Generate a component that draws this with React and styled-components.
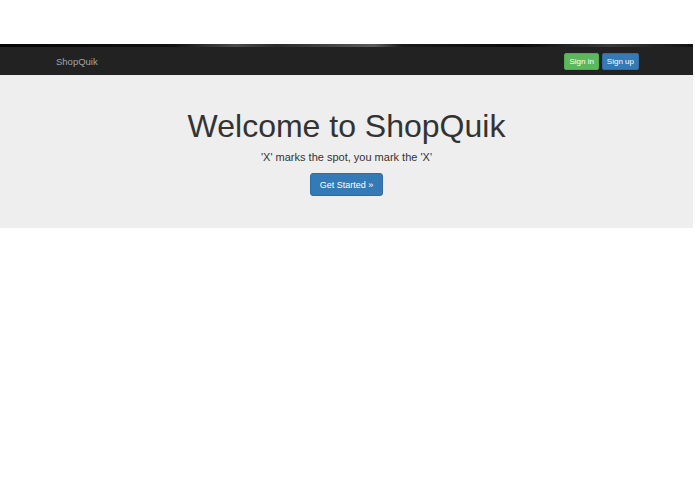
import React from 'react';
import styled, { createGlobalStyle } from 'styled-components';

const GlobalStyle = createGlobalStyle`
    body {
        margin: 0;
        background-color: #ffffff;
        font-family: "Liberation Sans", Arial, sans-serif;
        color: #333333;
    }
`;

const Page = styled.div`
    width: 693px;
    padding-top: 44px;
`;

const Header = styled.header`
    display: flex;
    flex-direction: column;
`;

const Shine = styled.div`
    height: 3px;
    background-image: linear-gradient(
        to right,
        #050505 0%,
        #111111 25%,
        #4a4a4a 34%,
        #2a2a2a 40%,
        #5a5a5a 54%,
        #1a1a1a 58%,
        #0a0a0a 75%,
        #3a3a3a 88%,
        #111111 100%
    );
`;

const NavBar = styled.nav`
    height: 28px;
    background-color: #222222;
    display: flex;
    align-items: center;
    justify-content: space-between;
    padding: 0 54px 0 56px;
`;

const Brand = styled.a`
    color: #a4a4a4;
    font-size: 9.5px;
    text-decoration: none;
    cursor: pointer;
`;

const ButtonGroup = styled.div`
    display: flex;
    gap: 3px;
`;

const NavButton = styled.button`
    height: 17px;
    padding: 0 4px;
    font-family: inherit;
    font-size: 8px;
    color: #ffffff;
    border-radius: 2px;
    border: 1px solid ${(p) => (p.$variant === 'success' ? '#4cae4c' : '#2e6da4')};
    background-color: ${(p) => (p.$variant === 'success' ? '#5cb85c' : '#337ab7')};
    cursor: pointer;
`;

const Jumbotron = styled.section`
    background-color: #eeeeee;
    padding: 34px 0 32px;
    display: flex;
    flex-direction: column;
    align-items: center;
`;

const Title = styled.h1`
    margin: 0;
    font-size: 32px;
    font-weight: 400;
    line-height: 35px;
    color: #333333;
`;

const Lead = styled.p`
    margin: 6px 0 0;
    font-size: 11px;
    line-height: 15px;
    color: #333333;
`;

const PrimaryButton = styled.button`
    margin-top: 8px;
    height: 23px;
    padding: 0 9px;
    font-family: inherit;
    font-size: 9px;
    color: #ffffff;
    background-color: #337ab7;
    border: 1px solid #2e6da4;
    border-radius: 3px;
    cursor: pointer;
`;

const App = () => {
    return (
        <>
            <GlobalStyle />
            <Page>
                <Header>
                    <Shine />
                    <NavBar>
                        <Brand>ShopQuik</Brand>
                        <ButtonGroup>
                            <NavButton $variant="success">Sign in</NavButton>
                            <NavButton $variant="primary">Sign up</NavButton>
                        </ButtonGroup>
                    </NavBar>
                </Header>
                <Jumbotron>
                    <Title>Welcome to ShopQuik</Title>
                    <Lead>'X' marks the spot, you mark the 'X'</Lead>
                    <PrimaryButton>Get Started »</PrimaryButton>
                </Jumbotron>
            </Page>
        </>
    );
};

export default App;
